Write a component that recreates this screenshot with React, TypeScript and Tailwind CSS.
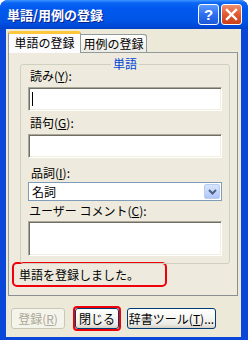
import React from "react"

const jp = "font-['MS_UI_Gothic','Noto_Sans_CJK_JP',sans-serif]"

function SunkenBox({ h, children }: { h: string; children?: React.ReactNode }) {
  return (
    <div
      className={`${h} w-full bg-white border border-t-[#ACA899] border-l-[#ACA899] border-b-white border-r-white shadow-[inset_1px_1px_0_#716F64,inset_-1px_-1px_0_#F1EFE2]`}
    >
      {children}
    </div>
  )
}

function XpButton({
  label,
  disabled,
  className = "",
}: {
  label: React.ReactNode
  disabled?: boolean
  className?: string
}) {
  return (
    <div
      className={`h-[21px] flex items-center justify-center rounded-[3px] text-[12px] leading-[14px] ${
        disabled
          ? "border border-[#C9C7BA] bg-[#F5F4EA] text-[#ACA899]"
          : "border border-[#003C74] bg-[linear-gradient(180deg,#FFFFFF_0%,#F7F7F4_40%,#ECEBE6_80%,#D6D0C5_100%)] text-black"
      } ${className}`}
    >
      {label}
    </div>
  )
}

export default function App() {
  return (
    <div className={`w-[248px] h-[340px] overflow-hidden bg-[#0A46D8] rounded-t-[8px] flex flex-col ${jp}`}>
      {/* Title bar */}
      <div className="h-[29px] shrink-0 flex items-center pl-[7px] pr-[6px] bg-[linear-gradient(180deg,#3D95FF_0%,#0A66F5_10%,#0058EE_30%,#0055E6_70%,#0049D9_90%,#0040C4_100%)]">
        <span className="text-white font-bold text-[13px] leading-[16px] [text-shadow:1px_1px_0_#0A1F8A] flex-1">
          単語/用例の登録
        </span>
        <div className="flex gap-[2px]">
          <div className="w-[21px] h-[21px] rounded-[3px] border border-white bg-[linear-gradient(180deg,#5C9BFF_0%,#2E6EF0_50%,#1C58DA_100%)] flex items-center justify-center text-white font-bold text-[15px] leading-none font-['Liberation_Sans',sans-serif]">
            ?
          </div>
          <div className="w-[21px] h-[21px] rounded-[3px] border border-white bg-[linear-gradient(180deg,#F0906F_0%,#E2582F_50%,#C8401B_100%)] flex items-center justify-center">
            <svg width="13" height="13" viewBox="0 0 13 13">
              <path d="M2 2 L11 11 M11 2 L2 11" stroke="white" strokeWidth="2.4" strokeLinecap="square" />
            </svg>
          </div>
        </div>
      </div>

      {/* Body */}
      <div className="flex-1 ml-[6px] mr-[7px] mb-[3px] bg-[#ECE9D8] flex flex-col">
        {/* Tabs */}
        <div className="h-[23px] flex items-end pl-[2px]">
          <div className="relative z-10 w-[73px] h-[22px] -mb-[1px] bg-[#FCFCFE] border border-b-0 border-[#919B9C] rounded-t-[3px] border-t-[3px] border-t-[#FFC83C] flex items-center justify-center text-[12px] leading-[14px] pb-[1px]">
            単語の登録
          </div>
          <div className="w-[66px] h-[18px] bg-[linear-gradient(180deg,#FFFFFF_0%,#F4F3EE_60%,#ECEBE6_100%)] border border-b-0 border-l-0 border-[#919B9C] rounded-tr-[3px] flex items-center justify-center text-[12px] leading-[14px]">
            用例の登録
          </div>
        </div>

        {/* Panel */}
        <div className="ml-[2px] mr-[3px] h-[244px] border border-[#919B9C] border-r-[#8A9091] border-b-[#8A9091] bg-[#EEEBDE] flex flex-col">
          {/* Group box */}
          <div className="relative ml-[11px] mr-[7px] mt-[11px] h-[200px] border border-[#D0D0BF] rounded-[3px] px-[7px] flex flex-col">
            <span className="absolute -top-[8px] left-1/2 -translate-x-1/2 px-[2px] bg-[#EEEBDE] text-[#0046D5] text-[12px] leading-[14px]">
              単語
            </span>
            <div className="mt-[4px] h-[14px] text-[12px] leading-[14px] pl-[2px]">
              読み(<u>Y</u>):
            </div>
            <div className="mt-[4px]">
              <SunkenBox h="h-[24px]">
                <div className="ml-[3px] mt-[4px] w-[1px] h-[14px] bg-black" />
              </SunkenBox>
            </div>
            <div className="mt-[5px] h-[14px] text-[12px] leading-[14px] pl-[2px]">
              語句(<u>G</u>):
            </div>
            <div className="mt-[4px]">
              <SunkenBox h="h-[24px]" />
            </div>
            <div className="mt-[8px] h-[14px] text-[12px] leading-[14px] pl-[3px]">
              品詞(<u>I</u>):
            </div>
            <div className="mt-[2px] h-[19px] border border-[#7F9DB9] bg-white flex items-center">
              <span className="flex-1 pl-[3px] text-[12px] leading-[14px]">名詞</span>
              <div className="w-[16px] h-[15px] mr-[1px] rounded-[2px] bg-[linear-gradient(180deg,#D9E5FD_0%,#C1D3FB_60%,#B0C6F8_100%)] border border-[#B9CCF6] flex items-center justify-center">
                <svg width="9" height="6" viewBox="0 0 9 6">
                  <path d="M1 1 L4.5 4.5 L8 1" stroke="#4D6185" strokeWidth="2" fill="none" />
                </svg>
              </div>
            </div>
            <div className="mt-[3px] h-[14px] text-[12px] leading-[14px] pl-[1px]">
              ユーザー コメント(<u>C</u>):
            </div>
            <div className="mt-[3px]">
              <SunkenBox h="h-[35px]" />
            </div>
          </div>

          {/* Status */}
          <div className="ml-[3px] w-[155px] h-[25px] -mt-[2px] border-2 border-[#F0000A] rounded-[5px] flex items-center pl-[5px] text-[12px] leading-[14px]">
            単語を登録しました。
          </div>
        </div>

        {/* Buttons */}
        <div className="mt-[12px] flex items-center pl-[5px]">
          <XpButton disabled label={<span>登録(<u>R</u>)</span>} className="w-[54px]" />
          <div className="relative ml-[10px]">
            <XpButton label="閉じる" className="w-[44px]" />
            <div className="absolute -inset-[2px] border-2 border-[#F0000A] rounded-[4px]" />
          </div>
          <XpButton label={<span>辞書ツール(<u>T</u>)...</span>} className="ml-[8px] w-[89px]" />
        </div>
      </div>
    </div>
  )
}
